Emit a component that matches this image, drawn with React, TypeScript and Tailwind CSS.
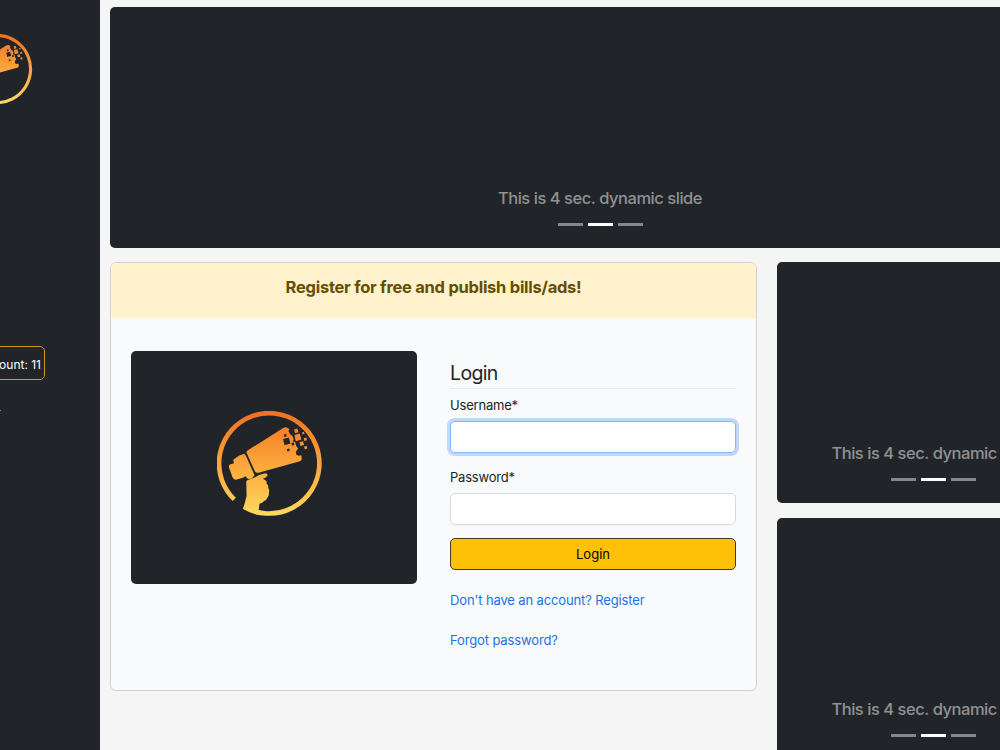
import React from "react";

function Logo({ id, className }: { id: string; className: string }) {
  const fill = `url(#${id})`;
  return (
    <svg viewBox="19 31 319 319" className={className} aria-hidden="true">
      <defs>
        <linearGradient id={id} gradientUnits="userSpaceOnUse" x1="178" y1="32" x2="178" y2="348">
          <stop offset="0" stopColor="#f36f21" />
          <stop offset="0.5" stopColor="#fca63a" />
          <stop offset="1" stopColor="#fdda5f" />
        </linearGradient>
      </defs>
      <path d="M71 297 A151 151 0 1 1 100 319" fill="none" stroke={fill} strokeWidth="14" />
      <path
        d="M108 157 Q106 153 112 149 L217 83 Q225 78 232 82 L237 86 L234 92 L239 101 L246 106 L250 115 L247 122 L254 124 L258 137 L263 144 L257 152 L257 162 L265 166 L273 164 L274 177 Q272 182 266 183 L144 217 Q136 218 133 212 Z"
        fill={fill}
      />
      <path
        d="M55 201 Q53 193 60 191 L70 188 L68 179 Q68 176 74 173 L86 165 L101 160 L106 166 L132 224 L123 235 L112 236 L105 227 L97 232 L76 238 Q69 238 66 231 Z"
        fill={fill}
      />
      <path
        d="M107 244 Q107 239 114 238 L129 233 Q143 222 164 218 Q172 219 171 225 Q169 231 157 235 L164 239 Q170 242 168 249 Q175 254 173 262 Q178 269 175 277 Q177 285 171 291 Q168 299 161 302 Q155 309 147 310 L144 332 L145 344 Q119 338 98 325 L108 287 Z"
        fill={fill}
      />
      <path
        d="M251 87l10-3 3 11-10 3zM252 103l16-4 5 18-17 5zM275 95l6-1 1 6-6 1zM267 125l11-3 3 11-11 3zM280 113l8-2 2 8-8 2zM281 138l8-2 2 8-8 2z"
        fill={fill}
      />
      <path d="M218 115l17-4 5 18-18 5zM229 146l7-2 2 7-7 2zM243 127l7-2 2 8-7 2zM220 102l7-2 2 7-7 2z" fill="#212529" />
    </svg>
  );
}

function Slide({ className }: { className: string }) {
  return (
    <section className={`flex shrink-0 flex-col items-center justify-end rounded-[5px] bg-[#212529] pb-[22px] ${className}`}>
      <p className="whitespace-nowrap text-[16.5px] font-medium leading-[26px] tracking-[-0.46px] text-[#909294]">This is 4 sec. dynamic slide</p>
      <div className="mt-[12px] flex gap-[5px]">
        <span className="h-[3px] w-[25px] bg-[#85888a]" />
        <span className="h-[3px] w-[25px] bg-white" />
        <span className="h-[3px] w-[25px] bg-[#85888a]" />
      </div>
    </section>
  );
}

function Field({ label, type, className }: { label: string; type: string; className: string }) {
  return (
    <label className="block">
      <span className="block text-[13px] leading-5 tracking-[-0.2px]">{label}</span>
      <input type={type} className={`mt-[6px] block h-8 w-full rounded-[5px] border bg-white px-3 text-sm outline-none ${className}`} />
    </label>
  );
}

export default function App() {
  return (
    <div className="flex h-[750px] w-[1000px] overflow-hidden bg-[#f5f5f5] font-['Inter','Liberation_Sans',sans-serif] text-[#212529]">
      <aside className="w-[100px] shrink-0 overflow-hidden bg-[#212529] pt-[34px]">
        <Logo id="sidebarLogo" className="-ml-[38px] block size-[71px]" />
        <div className="-ml-[65px] mt-[241px] flex h-[34px] w-[110px] items-center justify-end rounded-[5px] border border-[#c99a17] pr-[3px] pt-[4px] text-[12px] text-white">
          <span className="whitespace-nowrap">Bill count: 11</span>
        </div>
        <div className="mt-[30px] h-px w-px bg-[#85888b]" />
      </aside>
      <main className="shrink-0 pl-[10px] pt-[7px]">
        <Slide className="h-[241px] w-[980px]" />
        <div className="mt-[14px] flex items-start gap-5">
          <section className="h-[429px] w-[647px] shrink-0 overflow-hidden rounded-[6px] border border-[#d0d2d3] bg-[#f8fafc]">
            <header className="h-[55px] bg-[#fff2cc] pt-[12px] text-center text-[16.5px] font-bold leading-6 tracking-[-0.26px] text-[#664d03]">
              Register for free and publish bills/ads!
            </header>
            <div className="flex gap-[33px] pl-5 pt-[33px]">
              <div className="flex h-[233px] w-[286px] shrink-0 justify-center rounded-[5px] bg-[#212529] pr-[9px] pt-[60px]">
                <Logo id="cardLogo" className="size-[106px]" />
              </div>
              <form className="w-[286px] shrink-0 pt-[10px]" onSubmit={(e) => e.preventDefault()}>
                <h1 className="mb-[6px] border-b border-[#e7e9eb] pb-[3px] text-[19.5px] leading-6 tracking-[-0.65px]">Login</h1>
                <div className="flex flex-col gap-[14px]">
                  <Field label="Username*" type="text" className="border-[#86b7fe] shadow-[0_0_0_3px_#c3d7fa]" />
                  <Field label="Password*" type="password" className="border-[#d6d9dd]" />
                  <button className="-mt-px h-8 w-full rounded-[5px] border border-[#40391c] bg-[#ffc107] pt-[2px] text-[13px] text-black">Login</button>
                </div>
                <div className="mt-5 flex flex-col items-start gap-5 text-[13px] leading-5 tracking-[-0.13px] text-[#1a73e8]">
                  <a href="#register">Don't have an account? Register</a>
                  <a href="#password">Forgot password?</a>
                </div>
              </form>
            </div>
          </section>
          <div className="flex flex-col gap-[15px]">
            <Slide className="h-[241px] w-[313px]" />
            <Slide className="h-[241px] w-[313px]" />
          </div>
        </div>
      </main>
    </div>
  );
}
